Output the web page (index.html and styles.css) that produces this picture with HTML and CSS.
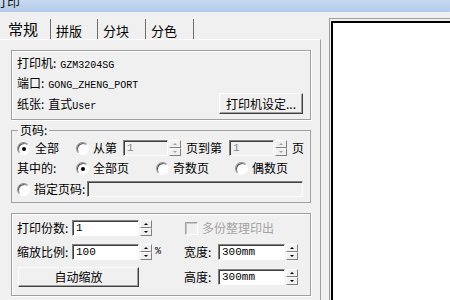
FILE: index.html
```html
<!DOCTYPE html>
<html lang="zh-CN">
  <head>
    <meta charset="UTF-8" />
    <title>打印</title>
    <link rel="stylesheet" href="styles.css">
  </head>
  <body>
    <div class="titlebar"><span class="title">打印</span></div>
    <div class="main">
      <div class="left">
        <div class="tabs">
          <div class="tab active">常规</div>
          <div class="tab">拼版</div>
          <div class="tab">分块</div>
          <div class="tab">分色</div>
        </div>
        <div class="panel">
          <div class="group info">
            <div class="info-row">打印机:<span class="mono">GZM3204SG</span></div>
            <div class="info-row">端口:<span class="mono">GONG_ZHENG_PORT</span></div>
            <div class="info-row split">
              <span class="paper-size">纸张:<span class="gap">直式</span><span class="mono user">User</span></span>
              <button class="btn setup-btn">打印机设定...</button>
            </div>
          </div>

          <fieldset class="group pages">
            <legend>页码:</legend>
            <div class="prow">
              <span class="col1"><span class="radio checked"></span><span class="rlabel">全部</span></span>
              <span class="radio"></span><span class="rlabel">从第</span>
              <span class="field off w45 ml6">1</span>
              <span class="spin off"><span class="up"></span><span class="down"></span></span>
              <span class="ml5">页到第</span>
              <span class="field off w45 ml7">1</span>
              <span class="spin off"><span class="up"></span><span class="down"></span></span>
              <span class="ml5">页</span>
            </div>
            <div class="prow">
              <span class="col1">其中的:</span>
              <span class="opt w80"><span class="radio checked"></span><span class="rlabel">全部页</span></span>
              <span class="opt w79"><span class="radio"></span><span class="rlabel">奇数页</span></span>
              <span class="opt"><span class="radio"></span><span class="rlabel">偶数页</span></span>
            </div>
            <div class="prow last">
              <span class="radio"></span><span class="rlabel">指定页码:</span>
              <span class="field off grow"></span>
            </div>
          </fieldset>

          <div class="group copies">
            <div class="crow">
              <span class="clabel">打印份数:</span>
              <span class="field w67">1</span>
              <span class="spin"><span class="up"></span><span class="down"></span></span>
            </div>
            <div class="crow">
              <span class="check"></span><span class="muted">多份整理印出</span>
            </div>
            <div class="crow">
              <span class="clabel">缩放比例:</span>
              <span class="field w67">100</span>
              <span class="spin"><span class="up"></span><span class="down"></span></span>
              <span class="mono pct">%</span>
            </div>
            <div class="crow">
              <span class="slabel">宽度:</span>
              <span class="field w67">300mm</span>
              <span class="spin ml2"><span class="up"></span><span class="down"></span></span>
            </div>
            <div class="crow tall">
              <button class="btn auto-btn">自动缩放</button>
            </div>
            <div class="crow tall">
              <span class="slabel">高度:</span>
              <span class="field w67">300mm</span>
              <span class="spin ml2"><span class="up"></span><span class="down"></span></span>
            </div>
          </div>
        </div>
      </div>
      <div class="preview"><div class="paper"></div></div>
    </div>
  </body>
</html>
```

FILE: styles.css
```css
body {
  margin: 0;
  width: 450px;
  height: 300px;
  overflow: hidden;
  background: #f0f0f0;
  color: #000;
  font-family: "Noto Sans CJK SC", "Noto Sans", sans-serif;
  font-size: 12px;
  line-height: 14px;
}
.mono {
  font-family: "Liberation Mono", "DejaVu Sans Mono", monospace;
  font-size: 10px;
}
.titlebar {
  height: 12px;
  overflow: hidden;
  background: linear-gradient(#c6daf0, #b3cbe7);
}
.title {
  display: block;
  margin: -6px 0 0 -6px;
  font-size: 13px;
  line-height: 14px;
  color: #1a1a1a;
}
.main {
  display: flex;
  height: 288px;
}
.left {
  width: 321px;
  flex-shrink: 0;
  display: flex;
  flex-direction: column;
}
.tabs {
  height: 27px;
  display: flex;
  align-items: flex-end;
}
.tab {
  box-sizing: border-box;
  width: 48px;
  height: 20px;
  padding: 4px 0 0 5px;
  font-size: 13px;
  line-height: 16px;
  border-right: 1px solid #6e6e6e;
}
.tab.active {
  width: 50px;
  height: 26px;
  padding: 7px 0 0 8px;
  font-size: 15px;
  line-height: 17px;
  border-right: none;
}
.tab.active + .tab {
  border-left: 1px solid #6e6e6e;
}
.panel {
  flex: 1;
  border-top: 1px solid #fff;
  border-right: 1px solid #a0a0a0;
  padding: 10px 9px 0 11px;
}
.group {
  border: 1px solid #a0a0a0;
  box-shadow: inset 1px 1px 0 #fff, 1px 1px 0 #fff;
}
.info {
  padding: 2px 7px 5px 5px;
}
.info-row {
  height: 20px;
  line-height: 20px;
  white-space: nowrap;
}
.info-row .mono {
  margin-left: 4px;
  line-height: 10px;
}
.info-row .gap {
  margin-left: 4px;
}
.info-row .user {
  margin-left: 0;
}
.info-row.split {
  display: flex;
  justify-content: space-between;
  align-items: center;
  height: 21px;
}
.paper-size {
  line-height: 20px;
}
.btn {
  box-sizing: border-box;
  margin: 0;
  padding: 0;
  background: #f0f0f0;
  border: 1px solid;
  border-color: #fff #404040 #404040 #fff;
  box-shadow: inset -1px -1px 0 #a0a0a0;
  font-family: inherit;
  font-size: 12px;
  line-height: 14px;
  color: #000;
}
.setup-btn {
  width: 84px;
  height: 21px;
}

/* page range group */
.pages {
  margin: 3px 0 0;
  padding: 1px 5px 3px;
  min-width: 0;
  box-shadow: none;
}
.pages legend {
  margin-left: 1px;
  padding: 0 2px;
  line-height: 14px;
  background: #f0f0f0;
}
.prow {
  display: flex;
  align-items: center;
  height: 20px;
  white-space: nowrap;
}
.prow.last {
  margin-top: 1px;
}
.col1 {
  display: flex;
  align-items: center;
  width: 59px;
  flex-shrink: 0;
}
.opt {
  display: flex;
  align-items: center;
}
.w80 { width: 80px; }
.w79 { width: 79px; }
.w45 { width: 45px; }
.w67 { width: 67px; }
.ml2 { margin-left: 2px; }
.ml5 { margin-left: 5px; }
.ml6 { margin-left: 6px; }
.ml7 { margin-left: 7px; }
.grow {
  flex: 1;
  height: 17px;
  margin: 0 2px;
}
.radio {
  box-sizing: border-box;
  position: relative;
  width: 13px;
  height: 13px;
  flex-shrink: 0;
  border-radius: 50%;
  border: 1px solid;
  border-color: #909090 #fff #fff #909090;
  box-shadow: inset 1px 1px 0 #5a5a5a;
  background: #fff;
}
.radio.checked::after {
  content: "";
  position: absolute;
  left: 4px;
  top: 4px;
  width: 4px;
  height: 4px;
  border-radius: 50%;
  background: #000;
}
.rlabel {
  margin-left: 4px;
}
.col1 .rlabel {
  margin-left: 5px;
}
.field {
  box-sizing: border-box;
  display: block;
  height: 16px;
  padding: 1px 3px 0;
  background: #fff;
  border: 1px solid;
  border-color: #808080 #fff #fff #808080;
  box-shadow: inset 1px 1px 0 #404040;
  font-family: "Liberation Mono", "DejaVu Sans Mono", monospace;
  font-size: 11px;
  line-height: 13px;
}
.field.off {
  background: #f0f0f0;
  color: #8a8a8a;
}
.spin {
  display: flex;
  flex-direction: column;
  width: 12px;
  height: 16px;
  margin-left: 1px;
  flex-shrink: 0;
}
.spin .up,
.spin .down {
  box-sizing: border-box;
  position: relative;
  height: 8px;
  border: 1px solid;
  border-color: #fff #808080 #808080 #fff;
  background: #f0f0f0;
}
.spin .up::after,
.spin .down::after {
  content: "";
  position: absolute;
  left: 3px;
  top: 2px;
  border-left: 2px solid transparent;
  border-right: 2px solid transparent;
}
.spin .up::after {
  border-bottom: 2px solid #000;
}
.spin .down::after {
  border-top: 2px solid #000;
}
.spin.off .up::after {
  border-bottom-color: #a0a0a0;
}
.spin.off .down::after {
  border-top-color: #a0a0a0;
}

/* copies / scale group */
.copies {
  margin-top: 10px;
  padding: 5px 5px 10px;
  display: grid;
  grid-template-columns: 167px 1fr;
  grid-auto-rows: 18px;
  row-gap: 6px;
}
.crow {
  display: flex;
  align-items: center;
  white-space: nowrap;
}
.crow.tall {
  height: 20px;
}
.clabel {
  width: 55px;
  flex-shrink: 0;
}
.slabel {
  width: 34px;
  flex-shrink: 0;
}
.pct {
  margin-left: 3px;
}
.check {
  box-sizing: border-box;
  width: 13px;
  height: 13px;
  margin-left: 1px;
  border: 1px solid;
  border-color: #a0a0a0 #fff #fff #a0a0a0;
  box-shadow: inset 1px 1px 0 #c8c8c8;
  background: #f0f0f0;
}
.muted {
  margin-left: 4px;
  color: #a3a3a3;
}
.auto-btn {
  width: 121px;
  height: 20px;
  margin-left: 1px;
}

/* preview */
.preview {
  flex: 1;
  display: flex;
  flex-direction: column;
  margin: 6px 0 0 8px;
  padding: 2px 0 0 1px;
  border-top: 1px solid #a0a0a0;
  border-left: 1px solid #a0a0a0;
}
.paper {
  flex: 1;
  background: #fff;
  border-top: 2px solid #000;
  border-left: 2px solid #000;
}
```
